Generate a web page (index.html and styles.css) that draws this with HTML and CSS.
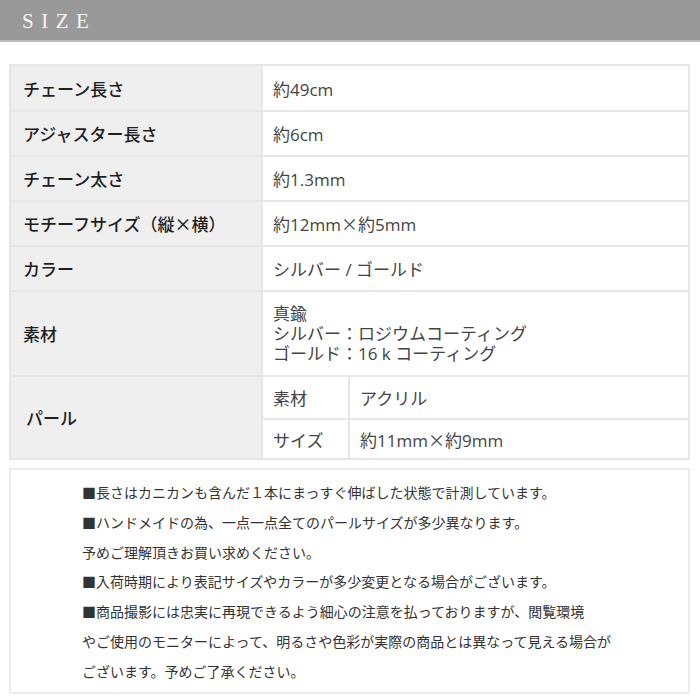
FILE: index.html
```html
<!DOCTYPE html>
<html lang="ja">

<head>
    <meta charset="utf-8">
    <meta name="viewport" content="width=device-width, initial-scale=1.0">
    <title>SIZE</title>
    <link rel="stylesheet" href="styles.css">
</head>

<body>

    <h2 class="overskrift">SIZE</h2>

    <table class="spec">
        <colgroup>
            <col class="col-label">
            <col class="col-sub">
            <col>
        </colgroup>
        <tr class="row-first">
            <th>チェーン長さ</th>
            <td colspan="2">約49cm</td>
        </tr>
        <tr>
            <th>アジャスター長さ</th>
            <td colspan="2">約6cm</td>
        </tr>
        <tr>
            <th>チェーン太さ</th>
            <td colspan="2">約1.3mm</td>
        </tr>
        <tr>
            <th>モチーフサイズ（縦×横）</th>
            <td colspan="2">約12mm<span class="kryds">×</span>約5mm</td>
        </tr>
        <tr>
            <th>カラー</th>
            <td colspan="2">シルバー / ゴールド</td>
        </tr>
        <tr class="row-material">
            <th>素材</th>
            <td colspan="2" class="multi">
                <div>真鍮</div>
                <div>シルバー：ロジウムコーティング</div>
                <div>ゴールド：16 k コーティング</div>
            </td>
        </tr>
        <tr class="row-pearl-a">
            <th rowspan="2" class="pearl">パール</th>
            <td>素材</td>
            <td>アクリル</td>
        </tr>
        <tr class="row-pearl-b">
            <td>サイズ</td>
            <td>約11mm<span class="kryds">×</span>約9mm</td>
        </tr>
    </table>

    <section class="noter">
        <p>■長さはカニカンも含んだ１本にまっすぐ伸ばした状態で計測しています。</p>
        <p>■ハンドメイドの為、一点一点全てのパールサイズが多少異なります。</p>
        <p>予めご理解頂きお買い求めください。</p>
        <p>■入荷時期により表記サイズやカラーが多少変更となる場合がございます。</p>
        <p>■商品撮影には忠実に再現できるよう細心の注意を払っておりますが、閲覧環境</p>
        <p>やご使用のモニターによって、明るさや色彩が実際の商品とは異なって見える場合が</p>
        <p>ございます。予めご了承ください。</p>
    </section>

</body></html>
```

FILE: styles.css
```css
body {
    margin: 0;
    background-color: white;
    font-family: "Open Sans", "Noto Sans CJK JP", sans-serif;
}

.overskrift {
    margin: 0;
    height: 40px;
    padding-left: 22px;
    background-color: #999999;
    border-bottom: 2px solid #bdbdbd;
    font-family: "Liberation Serif", serif;
    font-weight: normal;
    font-size: 21px;
    line-height: 42px;
    letter-spacing: 7.5px;
    color: #f6f6f6;
}

.spec {
    margin: 22px 0 0 9px;
    width: 681px;
    border-collapse: collapse;
    table-layout: fixed;
    border: 2px solid #e6e6e6;
}

.col-label {
    width: 252px;
}

.col-sub {
    width: 87px;
}

.spec th,
.spec td {
    box-sizing: border-box;
    border: 2px solid #e6e6e6;
    vertical-align: middle;
    text-align: left;
    padding: 0 0 0 10px;
    height: 45px;
}

.spec th {
    background-color: #efefef;
    font-family: "Noto Sans CJK JP", sans-serif;
    font-weight: 500;
    font-size: 17px;
    color: #1e1e1e;
    padding-left: 12px;
}

.spec td {
    font-size: 17px;
    color: #444;
}

.kryds {
    font-family: "Noto Sans CJK JP", sans-serif;
}

.row-first th,
.row-first td {
    height: 46px;
}

.row-material th,
.row-material td {
    height: 85px;
}

.multi {
    font-size: 17px;
    padding-top: 2px;
}

.multi div {
    height: 20px;
    line-height: 20px;
}

.row-pearl-a td {
    height: 43px;
}

.row-pearl-b td {
    height: 40px;
}

.spec th.pearl {
    padding-left: 15px;
}

.noter {
    margin: 8px 10px 0 9px;
    padding: 8px 0 5px 71px;
    border: 2px solid #ececec;
}

.noter p {
    margin: 0;
    font-family: "Noto Sans CJK JP", sans-serif;
    font-size: 14px;
    line-height: 29.8px;
    color: #333;
}
```
